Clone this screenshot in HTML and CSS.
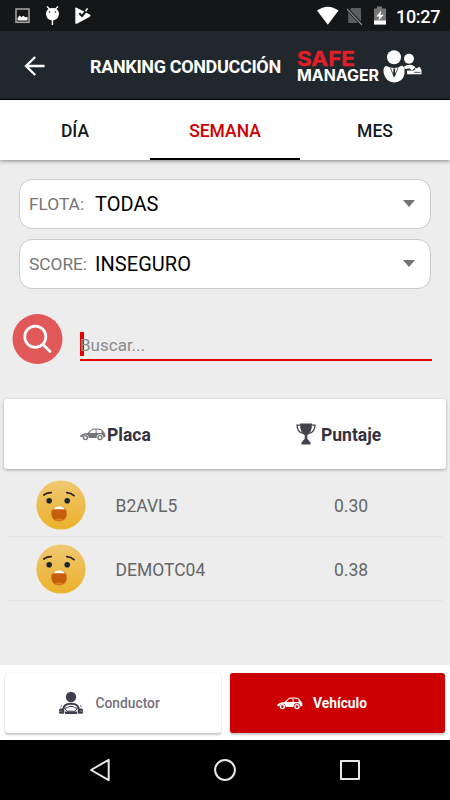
FILE: index.html
```html
<!DOCTYPE html>
<html lang="es">
<head>
<meta charset="utf-8">
<title>Ranking conducción</title>
<link rel="stylesheet" href="styles.css">
</head>
<body>
<svg class="defs" width="0" height="0" aria-hidden="true">
  <defs>
    <linearGradient id="skin" x1="0" y1="0" x2="0" y2="1"><stop offset="0" stop-color="#f0c872"/><stop offset="1" stop-color="#ebb12a"/></linearGradient>
    <symbol id="car" viewBox="0 0 26 13">
      <path fill-rule="evenodd" d="M.3 7.6Q2 5.4 7.6 4.9L11 1.7Q12.3 .6 15 .5Q20.5 .2 22.2 1.9L24.3 4.6Q25.8 6 25.4 9L23.3 9.4A3.3 3.3 0 0 0 16.7 9.9L8.7 10A3.3 3.3 0 0 0 2.2 9.2L.4 8.9ZM9.4 4.9H15.6V1.6Q12.4 1.6 11.5 2.6ZM16.4 1.6L16.8 4.9H21.8Q21.8 2.6 20.6 1.9Q18.5 1.5 16.4 1.6Z"/>
      <circle cx="5.4" cy="9.6" r="2" fill="none" stroke="currentColor" stroke-width="1.4"/>
      <circle cx="20" cy="9.6" r="2" fill="none" stroke="currentColor" stroke-width="1.4"/>
    </symbol>
    <symbol id="face" viewBox="0 0 50 50">
      <circle cx="25" cy="25" r="24.6" fill="url(#skin)"/>
      <path d="M7.8 15.2Q10.5 12.6 15.3 12.6M30.7 12.6Q35 12.8 38 15.6" fill="none" stroke="#26251f" stroke-width="1.6" stroke-linecap="round"/>
      <circle cx="13.2" cy="20.8" r="2.8" fill="#1c2630"/><circle cx="31.2" cy="20.8" r="2.8" fill="#1c2630"/>
      <rect x="15.4" y="26.3" width="15.4" height="15" rx="7" fill="#c65f0c"/>
      <path d="M17.2 29.3Q19 26.2 23.1 26.2Q27.2 26.2 29 29.3Z" fill="#fff"/>
      <path d="M18 39.4Q23 37.6 28 39.4Q23 42.3 18 39.4Z" fill="#dd7e1c"/>
    </symbol>
  </defs>
</svg>
<div class="screen">
  <div class="status">
    <svg class="status-left" width="80" height="31" viewBox="0 0 80 31">
      <rect x="1" y="9" width="13" height="13.3" fill="none" stroke="#aaa" stroke-width="1.5"/>
      <path d="M2.5 20.5V18L4.5 15.5L6.5 17L8.5 15.7L10 17H12.5V20.5Z" fill="#fff"/>
      <path d="M32 6.5L34.5 9M43 6.5L40.5 9M37.4 20V25" stroke="#fff" stroke-width="1.4"/>
      <path d="M31 13Q32 8 37.4 8Q43 8 44 13Q44 18.5 40 19.8Q37.5 21 35 19.8Q31 18.5 31 13Z" fill="#fff"/>
      <circle cx="34.5" cy="12" r=".8" fill="#151617"/><circle cx="40.5" cy="12" r=".8" fill="#151617"/>
      <path d="M60.3 8.3Q60.4 7 61.8 7.7L74.8 14.5Q76.4 15.6 74.8 16.7L61.8 23.7Q60.4 24.2 60.3 23Z" fill="#fff"/>
      <path d="M64.3 13.2L67 16L73.3 8.5" fill="none" stroke="#151617" stroke-width="2"/>
      <path d="M70.5 11.2L72.6 8.4" stroke="#fff" stroke-width="1.5"/>
    </svg>
    <svg class="status-right" width="72" height="31" viewBox="0 0 72 31">
      <path d="M1 10.5Q12 2.8 22.5 10.5L11.8 24.7Z" fill="#fff"/>
      <path d="M35.2 8H44Q45 8 45 9V23H32.2V11Z" fill="#5c5d5e"/>
      <path d="M30.3 8L46 24.8" stroke="#151617" stroke-width="3.2"/>
      <path d="M31 9L46 25" stroke="#858585" stroke-width="1.2"/>
      <path d="M61 6.5H66V8.5H70V24.5H58V8.5H61Z" fill="#777"/><path d="M58 20.5H70V24.5H58Z" fill="#fff"/>
      <path d="M65.2 10.5L60.3 16.5H63.5L62.3 20.7L67.8 14.8H64.5Z" fill="#fff"/>
    </svg>
    <span class="clock">10:27</span>
  </div>
  <header class="appbar">
    <svg class="back" width="22" height="22" viewBox="0 0 22 22"><path d="M20.5 11H2M11.2 2L2 11L11.2 20" fill="none" stroke="#fff" stroke-width="2.3"/></svg>
    <h1 class="title">RANKING CONDUCCIÓN</h1>
    <svg class="logo" width="128" height="40" viewBox="0 0 128 40">
      <text class="logo-safe" x="0" y="20.2" textLength="58" lengthAdjust="spacingAndGlyphs">SAFE</text>
      <text class="logo-manager" x="0" y="34.5" textLength="82" lengthAdjust="spacingAndGlyphs">MANAGER</text>
      <g fill="#fff">
        <circle cx="97" cy="11.3" r="7"/>
        <path d="M89.5 20Q85.7 20 86.7 27.2Q89 36.4 97.2 36.4Q105.5 36.4 107.5 28V21.5L104.8 19.5Q101.3 22 97.2 22Q92.5 22 89.5 20Z"/>
        <circle cx="112" cy="12.8" r="5"/>
        <path d="M107 20.5Q112.5 17.3 117.3 20.3L119.5 22.6L122.5 20.8L124.5 24V28.3H110V24.5H115L112.5 22.5L108 23Z"/>
      </g>
      <path d="M115.5 24.3L118.5 23M117 26.3H123.5M119 20.8L115.5 24.8" stroke="#20282e" stroke-width=".8"/>
      <path d="M93.4 21.9L97.2 30.8L101 21.9" fill="none" stroke="#20282e" stroke-width=".8"/>
      <path d="M96 22.4H98.4L97.9 24L98.4 28.5L97.2 30.8L96 28.5L96.5 24Z" fill="#20282e"/>
    </svg>
  </header>
  <nav class="tabs">
    <div class="tab">DÍA</div>
    <div class="tab active">SEMANA</div>
    <div class="tab">MES</div>
  </nav>
  <main class="content">
    <div class="select"><span class="label">FLOTA:</span><span class="value">TODAS</span><i class="caret"></i></div>
    <div class="select"><span class="label">SCORE:</span><span class="value">INSEGURO</span><i class="caret"></i></div>
    <div class="search">
      <svg class="search-icon" width="51" height="50" viewBox="0 0 51 50">
        <circle cx="25.5" cy="25" r="25" fill="#e15858"/>
        <circle cx="23.3" cy="22.7" r="10.6" fill="none" stroke="#fff" stroke-width="2.7"/>
        <path d="M31 30.5L38 37.5" stroke="#fff" stroke-width="2.9" stroke-linecap="round"/>
      </svg>
      <div class="field"><span class="placeholder">Buscar...</span></div>
    </div>
    <div class="table-head">
      <div class="head-plate"><svg class="dark-car" width="26" height="13"><use href="#car"/></svg><span>Placa</span></div>
      <div class="head-score">
        <svg width="20" height="22" viewBox="0 0 20 22" fill="#44414f">
          <path d="M4 .5H16Q16 10 11.3 12V16L13.5 18V19H14.5V21.5H5.5V19H6.5V18L8.7 16V12Q4 10 4 .5Z"/>
          <path d="M4.5 2.2H1Q1.2 8.5 6.5 10.5M15.5 2.2H19Q18.8 8.5 13.5 10.5" fill="none" stroke="#44414f" stroke-width="1.3"/>
        </svg><span>Puntaje</span></div>
    </div>
    <div class="row"><svg class="face" width="50" height="50"><use href="#face"/></svg><span class="plate">B2AVL5</span><span class="score">0.30</span></div>
    <div class="row"><svg class="face" width="50" height="50"><use href="#face"/></svg><span class="plate">DEMOTC04</span><span class="score">0.38</span></div>
  </main>
  <div class="switcher">
    <div class="button driver">
      <svg width="26" height="24" viewBox="0 0 26 24" fill="#423f4c">
        <circle cx="13" cy="6" r="5.2"/>
        <path d="M5.2 19Q5.2 12.7 13 12.7Q20.8 12.7 20.8 19" fill="none" stroke="#423f4c" stroke-width="1.9"/>
        <path d="M6.5 17.2Q10.5 17 11 15.5H15Q15.5 17 19.5 17.2L17 20.2H9Z" fill="none" stroke="#423f4c" stroke-width="1"/>
        <path d="M7 20.5H19V23H7Z"/>
        <rect x="1" y="17.5" width="5.3" height="5.3" rx="1.5"/><rect x="19.7" y="17.5" width="5.3" height="5.3" rx="1.5"/>
        <path d="M2.5 15.8L4 14.5M23.5 15.8L22 14.5" stroke="#423f4c"/>
        <path d="M1 20.2H4M22 20.2H25" stroke="#aaa" stroke-width=".7"/>
      </svg><span>Conductor</span>
    </div>
    <div class="button vehicle"><svg width="26" height="13"><use href="#car"/></svg><span>Vehículo</span></div>
  </div>
  <div class="navbar">
    <svg width="22" height="24" viewBox="0 0 22 24"><path d="M19.7 1.8V22.2L2 12Z" fill="none" stroke="#e8e8e8" stroke-width="2" stroke-linejoin="round"/></svg>
    <svg width="22" height="24" viewBox="0 0 22 24"><circle cx="11" cy="12" r="9.9" fill="none" stroke="#e8e8e8" stroke-width="2"/></svg>
    <svg width="22" height="24" viewBox="0 0 22 24"><rect x="2" y="3" width="18" height="18" fill="none" stroke="#e8e8e8" stroke-width="2" stroke-linejoin="round"/></svg>
  </div>
</div>
</body>
</html>
```
FILE: styles.css
```css
* { box-sizing: border-box; }
body { margin: 0; font-family: Roboto, "Liberation Sans", sans-serif; }
svg { display: block; flex: none; }
.defs { position: absolute; }
.screen { width: 450px; height: 800px; display: flex; flex-direction: column; background: #ededed; overflow: hidden; white-space: nowrap; }
.status { height: 31px; flex: none; display: flex; background: #151617; color: #fff; padding: 0 10px 0 15px; }
.status-right { margin-left: auto; margin-right: 8px; }
.clock { width: 44px; font-size: 18px; line-height: 33px; font-weight: 500; letter-spacing: -.3px; }
.appbar { height: 69px; flex: none; display: flex; align-items: center; background: #20282e; border-bottom: 1px solid #000; padding-left: 24px; color: #fff; }
.back { margin-top: 2px; }
.title { width: 192px; margin: 4px 0 0 44px; font-size: 18px; line-height: 24px; font-weight: 700; letter-spacing: -.34px; }
.logo { margin: 1px 0 0 15px; }
.logo-safe, .logo-manager { font-family: Inter, sans-serif; font-weight: 700; }
.logo-safe { fill: #df2028; font-size: 20.3px; stroke: #df2028; stroke-width: .4px; }
.logo-manager { fill: #fff; font-size: 15.4px; }
.tabs { height: 60px; flex: none; display: flex; background: #fff; box-shadow: 0 1px 4px rgba(0,0,0,.45); position: relative; }
.tab { flex: 1; text-align: center; font-size: 17.5px; line-height: 62px; font-weight: 500; color: #151a1e; height: 60px; }
.active { color: #d00000; border-bottom: 2.5px solid #000; }
.content { flex: 1; padding: 19px 4px 0; }
.select { height: 50px; margin: 0 15px 10px; display: flex; align-items: center; background: #fff; border: 1px solid #cbcbcb; border-radius: 13px; padding: 0 15px 0 9px; }
.label { width: 66px; font-size: 17.3px; color: #757575; }
.value { font-size: 20px; color: #000; letter-spacing: .05px; }
.caret { margin: 0 0 2px auto; border: 6px solid transparent; border-top: 7px solid #737373; border-bottom: 0; }
.search { display: flex; height: 60px; padding: 0 14px 0 8px; margin-top: 25px; }
.field { flex: 1; height: 29px; margin: 18px 0 0 17px; border-bottom: 2px solid #e80000; }
.placeholder { display: block; height: 24px; border-left: 4px solid #e80000; font-size: 17px; line-height: 26px; color: #8b8b8b; text-indent: -4px; }
.table-head { height: 70px; margin-top: 25px; display: flex; align-items: center; background: #fff; border-radius: 3px; box-shadow: 0 1px 3px rgba(0,0,0,.32); color: #34323e; font-size: 17.5px; font-weight: 700; }
.head-plate { width: 216px; padding-left: 76px; display: flex; align-items: center; gap: 1px; }
.head-plate span, .head-score span { padding-top: 2px; }
.dark-car { fill: #76757b; color: #76757b; }
.head-score { padding-left: 76px; display: flex; align-items: center; gap: 5px; }
.row { height: 64px; display: flex; align-items: center; margin: 0 3px; padding-left: 29px; border-bottom: 1px solid #e4e4e4; color: #666; font-size: 17.5px; }
.table-head + .row { height: 68px; padding-top: 5px; }
.face { margin-right: 29.5px; }
.plate { width: 219px; margin-top: 2px; }
.score { margin: 2px 0 0 -.5px; }
.switcher { height: 75px; flex: none; display: flex; gap: 9px; padding: 8px 5px; background: #fff; }
.button { width: 216px; height: 60px; display: flex; align-items: center; font-size: 13.8px; font-weight: 500; border-radius: 3px; box-shadow: 0 2px 2px rgba(0,0,0,.2), 0 0 1px rgba(0,0,0,.2); }
.driver { padding-left: 53px; gap: 11.5px; color: #74717b; }
.vehicle { padding-left: 47px; gap: 10.5px; color: #fff; background: #cc0000; fill: #fff; font-weight: 700; }
.navbar { height: 60px; flex: none; display: flex; align-items: center; gap: 103px; padding-left: 89px; background: #000; }
```
